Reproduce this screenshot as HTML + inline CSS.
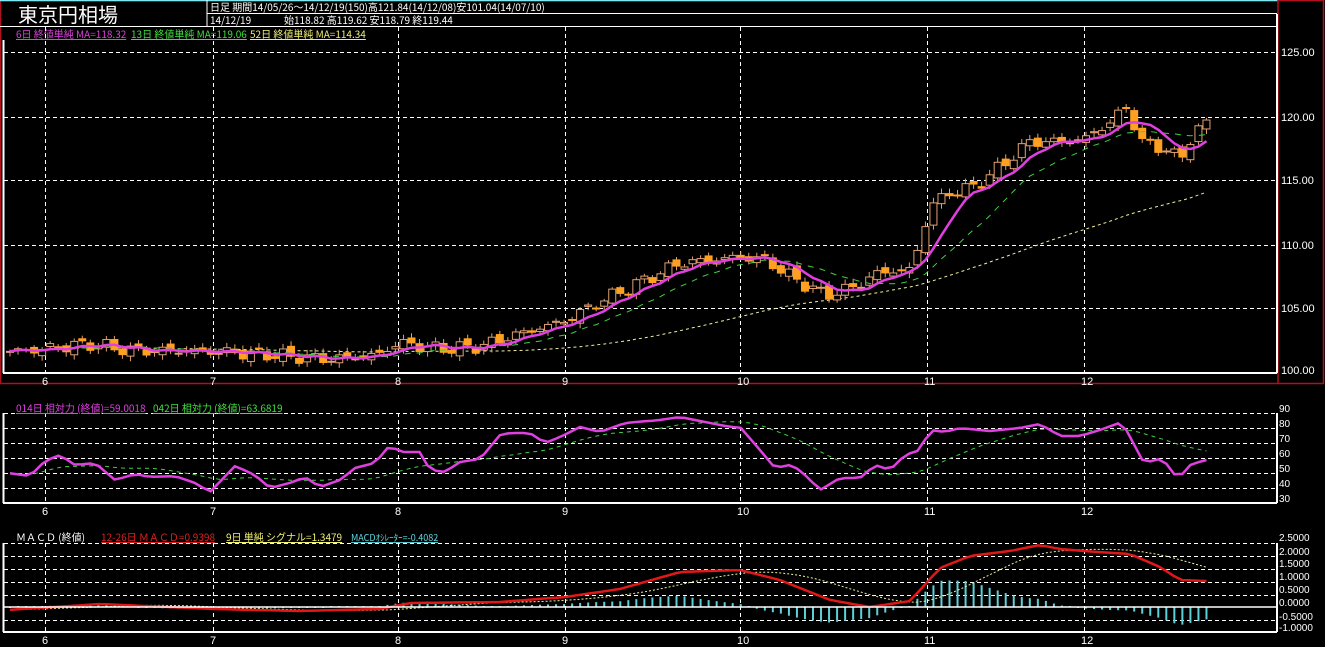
<!DOCTYPE html>
<html><head><meta charset="utf-8">
<style>
html,body{margin:0;padding:0;background:#000;width:1325px;height:647px;overflow:hidden}
svg{display:block}
text{font-family:"Liberation Sans","Noto Sans CJK JP",sans-serif}
.t{font-family:"Noto Sans CJK JP","Liberation Sans",sans-serif}
</style></head><body>
<svg id="s" width="1325" height="647" viewBox="0 0 1325 647" xmlns="http://www.w3.org/2000/svg">
<rect width="1325" height="647" fill="#000"/>
<rect x="0.5" y="0.5" width="1323" height="383" fill="none" stroke="#b01020" stroke-width="1.5"/>
<line x1="0" y1="0.5" x2="1278" y2="0.5" stroke="#7fe8f0" stroke-width="1.5"/>
<line x1="1278" y1="0" x2="1278" y2="383" stroke="#b01020" stroke-width="1.5"/>
<line x1="207" y1="0" x2="207" y2="26" stroke="#fff"/>
<line x1="207" y1="13.5" x2="1277" y2="13.5" stroke="#fff"/>
<line x1="0" y1="26.5" x2="1277" y2="26.5" stroke="#fff"/>
<text x="18" y="22" fill="#fff" font-size="20" class="t">東京円相場</text>
<text x="210" y="11" fill="#fff" font-size="10" class="t">日足 期間14/05/26〜14/12/19(150)高121.84(14/12/08)安101.04(14/07/10)</text>
<text x="210" y="24" fill="#fff" font-size="10" class="t">14/12/19</text>
<text x="284" y="24" fill="#fff" font-size="10" class="t">始118.82 高119.62 安118.79 終119.44</text>
<text x="16" y="38" fill="#e040e0" font-size="10" class="t" text-decoration="underline">6日 終値単純 MA=118.32</text>
<text x="131" y="38" fill="#40e040" font-size="10" class="t" text-decoration="underline">13日 終値単純 MA=119.06</text>
<text x="250" y="38" fill="#f0f070" font-size="10" class="t" text-decoration="underline">52日 終値単純 MA=114.34</text>
<g id="grid" stroke="#fff" stroke-dasharray="4,3" stroke-width="1"></g>
<line x1="3.5" y1="40" x2="3.5" y2="373" stroke="#fff" stroke-width="2"/>
<line x1="3" y1="373" x2="1277" y2="373" stroke="#fff" stroke-width="2"/>
<line x1="1277" y1="14" x2="1277" y2="373" stroke="#fff" stroke-width="2"/>
<g fill="#fff" font-size="11">
<text x="1281" y="56">125.00</text><text x="1281" y="121">120.00</text><text x="1281" y="184">115.00</text>
<text x="1281" y="249">110.00</text><text x="1281" y="312">105.00</text><text x="1281" y="374">100.00</text>
</g>
<g id="main"></g>
<text x="16" y="412" fill="#e040e0" font-size="10" class="t" text-decoration="underline">014日 相対力 (終値)=59.0018</text>
<text x="153" y="412" fill="#40e040" font-size="10" class="t" text-decoration="underline">042日 相対力 (終値)=63.6819</text>
<g id="rsi"></g>
<line x1="3.5" y1="413" x2="3.5" y2="503" stroke="#fff" stroke-width="2"/>
<line x1="3" y1="503" x2="1277" y2="503" stroke="#fff" stroke-width="2"/>
<line x1="1277" y1="413" x2="1277" y2="503" stroke="#fff" stroke-width="2"/>
<g fill="#fff" font-size="10">
<text x="1279" y="412">90</text><text x="1279" y="427">80</text><text x="1279" y="442">70</text><text x="1279" y="457">60</text>
<text x="1279" y="472">50</text><text x="1279" y="487">40</text><text x="1279" y="502">30</text>
</g>
<text x="16" y="541" fill="#fff" font-size="10" class="t">ＭＡＣＤ (終値)</text>
<text x="101" y="541" fill="#e02020" font-size="10" class="t" text-decoration="underline">12-26日 ＭＡＣＤ=0.9398</text>
<text x="226" y="541" fill="#f0f070" font-size="10" class="t" text-decoration="underline">9日 単純 シグナル=1.3479</text>
<text x="351" y="541" fill="#60d8e0" font-size="9" class="t" text-decoration="underline">MACDｵｼﾚｰﾀｰ=-0.4082</text>
<g id="macd"></g>
<line x1="3.5" y1="543" x2="3.5" y2="632" stroke="#fff" stroke-width="2"/>
<line x1="3" y1="632" x2="1277" y2="632" stroke="#fff" stroke-width="2"/>
<line x1="1277" y1="543" x2="1277" y2="632" stroke="#fff" stroke-width="2"/>
<line x1="3" y1="607" x2="1277" y2="607" stroke="#fff" stroke-width="1.5"/>
<g fill="#fff" font-size="10">
<text x="1279" y="541">2.5000</text><text x="1279" y="555">2.0000</text><text x="1279" y="567">1.5000</text>
<text x="1279" y="580">1.0000</text><text x="1279" y="593">0.5000</text><text x="1279" y="606">0.0000</text>
<text x="1279" y="620">-0.5000</text><text x="1279" y="631">-1.0000</text>
</g>
<g fill="#fff" font-size="11" id="xl"></g>
</svg>
<script>
var NS="http://www.w3.org/2000/svg";
function el(p,t,a){var e=document.createElementNS(NS,t);for(var k in a)e.setAttribute(k,a[k]);document.getElementById(p).appendChild(e);return e;}
var vx=[45,213,398,565,740,927,1084];
for(var i=0;i<vx.length;i++){
 el('grid','line',{x1:vx[i]+.5,y1:27,x2:vx[i]+.5,y2:373});
 el('grid','line',{x1:vx[i]+.5,y1:413,x2:vx[i]+.5,y2:503});
 el('grid','line',{x1:vx[i]+.5,y1:543,x2:vx[i]+.5,y2:632});
 var lbl=String(i+6);
 [381,511,640].forEach(function(y){var t=el('xl','text',{x:vx[i]-3,y:y+4});t.textContent=lbl;});
}
[52,117,180,245,308].forEach(function(y){el('grid','line',{x1:4,y1:y+.5,x2:1277,y2:y+.5});});
[413,428,443,458,473,488].forEach(function(y){el('grid','line',{x1:4,y1:y+.5,x2:1277,y2:y+.5});});
[543,556,569,582,595,620].forEach(function(y){el('grid','line',{x1:4,y1:y+.5,x2:1277,y2:y+.5});});
function interp(k,x){for(var i=0;i<k.length-1;i++){if(x<=k[i+1][0]){var t=(x-k[i][0])/(k[i+1][0]-k[i][0]);return k[i][1]+t*(k[i+1][1]-k[i][1]);}}return k[k.length-1][1];}
var kp=[[8,101.6],[45,101.8],[90,102.2],[130,101.7],[213,101.6],[260,101.4],[330,101.0],[380,101.4],[398,102.3],[440,101.8],[480,102.0],[520,103.0],[565,104.0],[600,105.5],[640,107.0],[680,108.5],[740,109.0],[765,108.8],[790,107.5],[825,106.0],[850,106.5],[880,107.8],[910,108.0],[920,110],[930,113],[950,114],[975,114.5],[1000,116],[1030,118],[1060,118],[1084,118.2],[1110,119.5],[1128,120.8],[1140,118],[1165,117.5],[1180,116.5],[1192,118.5],[1205,119.4]];
function Y(p){return 372-(p-100)*12.8;}
var N=150,C=[],X=[];
for(var i=0;i<N;i++){var x=10+i*8.03;X.push(x);C.push(interp(kp,x)+0.35*Math.sin(i*1.7)+0.2*Math.sin(i*4.3));}
var ma=function(n){var r=[];for(var i=0;i<N;i++){var s=0,c=0;for(var j=Math.max(0,i-n+1);j<=i;j++){s+=C[j];c++;}r.push(s/c);}return r;};
function pl(arr,xs,f){return arr.map(function(v,i){return xs[i].toFixed(1)+','+f(v).toFixed(1);}).join(' ');}
el('main','polyline',{points:pl(ma(52),X,Y),fill:'none',stroke:'#f0f0a0','stroke-dasharray':'3,3','stroke-width':1});
for(var i=0;i<N;i++){
 var o=i?C[i-1]+0.25*Math.sin(i*2.9):C[i],c=C[i],h=Math.max(o,c)+0.15+0.25*Math.abs(Math.sin(i*3.1)),l=Math.min(o,c)-0.15-0.25*Math.abs(Math.cos(i*2.3));
 var x=X[i];
 el('main','line',{x1:x,y1:Y(h),x2:x,y2:Y(l),stroke:'#e0a070'});
 var bt=Y(Math.max(o,c)),ht=Math.max(1,Math.abs(Y(o)-Y(c)));
 if(c>=o) el('main','rect',{x:x-3.5,y:bt,width:7,height:ht,fill:'#000',stroke:'#e0a070'});
 else el('main','rect',{x:x-3.5,y:bt,width:7,height:ht,fill:'#ffa020',stroke:'#ffa020'});
}
el('main','polyline',{points:pl(ma(13),X,Y),fill:'none',stroke:'#40d040','stroke-dasharray':'6,6','stroke-width':1});
el('main','polyline',{points:pl(ma(6),X,Y),fill:'none',stroke:'#e040e0','stroke-width':2.5});
var rk=[[8,473],[30,476],[45,461],[60,455],[75,465],[95,463],[115,480],[135,474],[150,477],[175,476],[195,483],[210,492],[235,466],[255,475],[270,488],[290,483],[305,477],[320,487],[340,480],[355,468],[375,463],[390,445],[400,452],[420,452],[430,470],[445,472],[460,462],[480,459],[500,435],[510,433],[530,433],[545,443],[560,437],[580,427],[600,432],[625,423],[660,420],[680,417],[700,421],[730,427],[740,427],[760,450],[775,468],[790,465],[800,470],[820,490],[840,478],[860,478],[875,465],[890,470],[905,455],[920,450],[930,430],[945,432],[960,428],[990,431],[1020,428],[1040,424],[1060,436],[1080,436],[1100,430],[1122,422],[1145,465],[1155,458],[1165,462],[1178,479],[1190,465],[1205,460]];
var R=X.map(function(x){return interp(rk,x);});
var R2=R.map(function(v,i){var s=0,c=0;for(var j=Math.max(0,i-14);j<=i;j++){s+=R[j];c++;}return s/c;});
var id=function(v){return v;};
el('rsi','polyline',{points:pl(R2,X,id),fill:'none',stroke:'#40d040','stroke-dasharray':'4,4','stroke-width':1});
el('rsi','polyline',{points:pl(R,X,id),fill:'none',stroke:'#e040e0','stroke-width':2.5});
var mk=[[8,610],[100,604],[213,609],[300,611],[380,609],[410,603],[500,602],[565,597],[620,589],[680,572],[740,570],[780,580],[830,600],[870,607],[910,601],[940,568],[970,556],[1010,551],[1040,545],[1060,549],[1084,551],[1130,554],[1160,567],[1180,580],[1205,581]];
var M=X.map(function(x){return interp(mk,x);});
var S=M.map(function(v,i){var s=0,c=0;for(var j=Math.max(0,i-12);j<=i;j++){s+=M[j];c++;}return s/c;});
for(var i=0;i<N;i++){var d=(M[i]-S[i])*0.9;if(Math.abs(d)<1)d=d<0?-1:1;el('macd','line',{x1:X[i],y1:607,x2:X[i],y2:607+d,stroke:'#60d0d8','stroke-width':2});}
el('macd','polyline',{points:pl(S,X,id),fill:'none',stroke:'#f0f0a0','stroke-dasharray':'2,2','stroke-width':1});
el('macd','polyline',{points:pl(M,X,id),fill:'none',stroke:'#e01818','stroke-width':2.5});
</script>
</body></html>
